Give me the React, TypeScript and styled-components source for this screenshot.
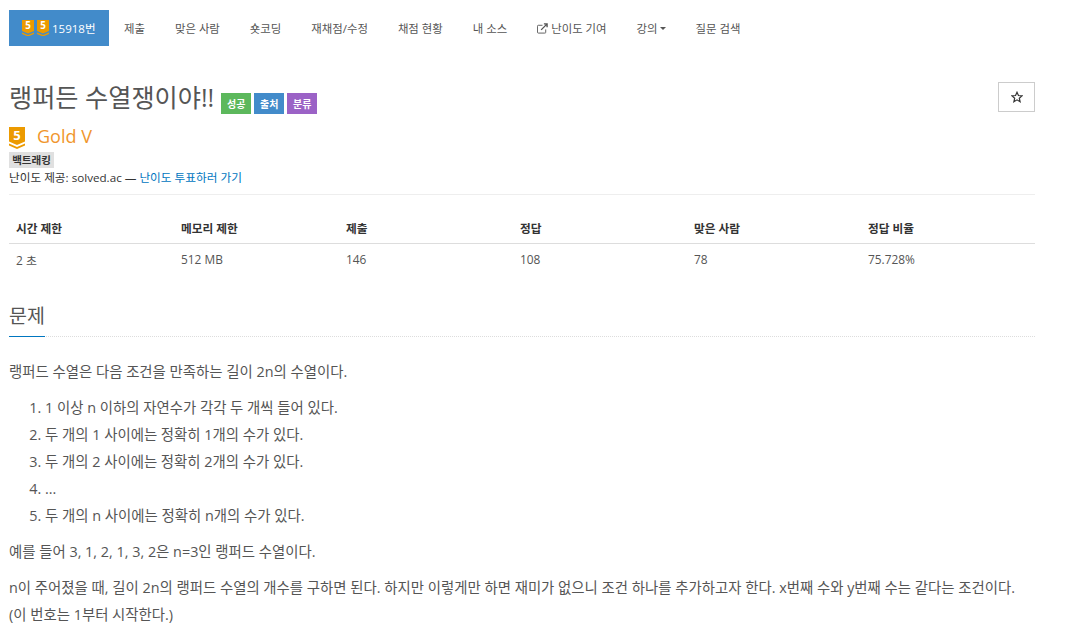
import React from 'react';
import styled, { createGlobalStyle } from 'styled-components';

const GlobalStyle = createGlobalStyle`
    html, body {
        margin: 0;
        padding: 0;
        background: #fff;
        overflow: hidden;
    }
    body {
        font-family: 'Open Sans', 'Noto Sans CJK KR', sans-serif;
        font-size: 14px;
        color: #555;
    }
    * {
        box-sizing: border-box;
    }
`;

const TABS = ['제출', '맞은 사람', '숏코딩', '재채점/수정', '채점 현황', '내 소스'];

const COLUMNS = [
    { title: '시간 제한', value: '2 초', width: 165 },
    { title: '메모리 제한', value: '512 MB', width: 165 },
    { title: '제출', value: '146', width: 174 },
    { title: '정답', value: '108', width: 174 },
    { title: '맞은 사람', value: '78', width: 174 },
    { title: '정답 비율', value: '75.728%', width: 174 },
];

const CONDITIONS = [
    '1 이상 n 이하의 자연수가 각각 두 개씩 들어 있다.',
    '두 개의 1 사이에는 정확히 1개의 수가 있다.',
    '두 개의 2 사이에는 정확히 2개의 수가 있다.',
    '...',
    '두 개의 n 사이에는 정확히 n개의 수가 있다.',
];

const TierBadge: React.FC<{ size: number }> = ({ size }) => (
    <BadgeSvg viewBox="0 0 16 22" width={size} height={(size * 22) / 16}>
        <path d="M0 0H16V14.5L8 18L0 14.5Z" fill="#ec9a00" />
        <path d="M0 16.5L8 20L16 16.5V18.5L8 22L0 18.5Z" fill="#ec9a00" />
        <text x="8" y="12.6" textAnchor="middle" fontSize="13" fontWeight="700" fill="#fff" fontFamily="'Open Sans', sans-serif">
            5
        </text>
    </BadgeSvg>
);

const App: React.FC = () => {
    return (
        <Page>
            <GlobalStyle />
            <Tabs>
                <ActiveTab>
                    <TierBadge size={12} />
                    <TierBadge size={12} />
                    <span>15918번</span>
                </ActiveTab>
                {TABS.map((tab) => (
                    <Tab key={tab}>{tab}</Tab>
                ))}
                <Tab>
                    <svg viewBox="0 0 12 12" width="11" height="11" fill="none" stroke="#555" strokeWidth="1">
                        <path d="M9.5 7V10.5A1 1 0 0 1 8.5 11H1.5A1 1 0 0 1 .5 10V3.5A1 1 0 0 1 1.5 2.5H6" />
                        <path d="M4.5 7.5L10.5 1.5M7.5 1H11V4.5" strokeWidth="1.5" />
                    </svg>
                    난이도 기여
                </Tab>
                <Tab>
                    강의
                    <Caret />
                </Tab>
                <Tab>질문 검색</Tab>
            </Tabs>

            <TitleRow>
                <Title>랭퍼든 수열쟁이야!!</Title>
                <Label $color="#5cb85c">성공</Label>
                <Label $color="#428bca">출처</Label>
                <Label $color="#9b62c6">분류</Label>
                <StarButton>
                    <svg viewBox="0 0 24 24" width="12" height="12" fill="none" stroke="#333" strokeWidth="2.4">
                        <path d="M12 2.5L14.9 9L22 9.7L16.6 14.4L18.2 21.4L12 17.7L5.8 21.4L7.4 14.4L2 9.7L9.1 9Z" />
                    </svg>
                </StarButton>
            </TitleRow>

            <TierRow>
                <TierBadge size={16} />
                <TierName>Gold V</TierName>
            </TierRow>
            <Tag>백트래킹</Tag>
            <Credit>
                난이도 제공: solved.ac — <CreditLink>난이도 투표하러 가기</CreditLink>
            </Credit>
            <Divider />

            <InfoTable>
                <thead>
                    <tr>
                        {COLUMNS.map((col) => (
                            <HeadCell key={col.title} $width={col.width}>
                                {col.title}
                            </HeadCell>
                        ))}
                    </tr>
                </thead>
                <tbody>
                    <tr>
                        {COLUMNS.map((col) => (
                            <BodyCell key={col.title}>{col.value}</BodyCell>
                        ))}
                    </tr>
                </tbody>
            </InfoTable>

            <SectionHeader>
                <SectionTitle>문제</SectionTitle>
            </SectionHeader>

            <Paragraph>랭퍼드 수열은 다음 조건을 만족하는 길이 2n의 수열이다.</Paragraph>
            <Conditions>
                {CONDITIONS.map((item) => (
                    <Condition key={item}>{item}</Condition>
                ))}
            </Conditions>
            <Paragraph>예를 들어 3, 1, 2, 1, 3, 2은 n=3인 랭퍼드 수열이다.</Paragraph>
            <LastParagraph>
                n이 주어졌을 때, 길이 2n의 랭퍼드 수열의 개수를 구하면 된다. 하지만 이렇게만 하면 재미가 없으니 조건 하나를 추가하고자 한다. x번째 수와 y번째 수는 같다는 조건이다.
                <br />
                (이 번호는 1부터 시작한다.)
            </LastParagraph>
        </Page>
    );
};

const Page = styled.div`
    width: 1035px;
    padding: 10px 0 0 9px;
`;

const Tabs = styled.div`
    display: flex;
    height: 36px;
`;

const Tab = styled.a`
    display: flex;
    align-items: center;
    gap: 3px;
    padding: 0 15px;
    font-size: 11.4px;
    color: #555;
    white-space: nowrap;
`;

const ActiveTab = styled(Tab)`
    gap: 3px;
    width: 100px;
    padding: 0 0 0 13px;
    background: #428bca;
    color: #fff;
    font-size: 11.5px;
`;

const BadgeSvg = styled.svg`
    display: block;
    flex: none;
`;

const Caret = styled.span`
    display: inline-block;
    margin-left: -1px;
    border-top: 3px solid #555;
    border-left: 3.5px solid transparent;
    border-right: 3.5px solid transparent;
`;

const TitleRow = styled.div`
    display: flex;
    align-items: flex-end;
    height: 32px;
    margin-top: 36px;
`;

const Title = styled.h1`
    margin: 0 7px 2px 0;
    font-size: 25.2px;
    font-weight: 400;
    line-height: 30px;
    color: #555;
`;

const Label = styled.span<{ $color: string }>`
    display: flex;
    align-items: center;
    justify-content: center;
    width: 30px;
    height: 21px;
    margin: 0 3px 0 0;
    background: ${(props) => props.$color};
    color: #fff;
    font-size: 10px;
    font-weight: 700;
`;

const StarButton = styled.button`
    display: flex;
    align-items: center;
    justify-content: center;
    align-self: flex-start;
    width: 37px;
    height: 30px;
    margin-left: auto;
    padding: 0;
    background: #fff;
    border: 1px solid #ccc;
`;

const TierRow = styled.div`
    display: flex;
    align-items: center;
    gap: 12px;
    height: 22px;
    margin-top: 13px;
`;

const TierName = styled.span`
    padding-bottom: 5px;
    font-size: 18px;
    color: #f0962c;
`;

const Tag = styled.div`
    width: 45px;
    height: 16px;
    margin-top: 3px;
    background: #e0e0e0;
    color: #333;
    font-size: 10.5px;
    font-weight: 700;
    line-height: 16px;
    text-align: center;
`;

const Credit = styled.div`
    margin-top: 1px;
    font-size: 11.65px;
    line-height: 18px;
    color: #333;
`;

const CreditLink = styled.a`
    color: #0076c0;
`;

const Divider = styled.hr`
    height: 1px;
    margin: 7px 0 0;
    border: 0;
    background: #eee;
`;

const InfoTable = styled.table`
    width: 1026px;
    margin-top: 20px;
    border-collapse: collapse;
    table-layout: fixed;
`;

const HeadCell = styled.th<{ $width: number }>`
    width: ${(props) => props.$width}px;
    height: 28px;
    padding: 0 7px 2px;
    border-bottom: 1px solid #ddd;
    color: #333;
    font-size: 11.7px;
    font-weight: 700;
    text-align: left;
`;

const BodyCell = styled.td`
    height: 32px;
    padding: 0 7px;
    font-size: 11.9px;
    color: #555;
`;

const SectionHeader = styled.div`
    height: 37px;
    margin: 25px 0 21px;
    border-bottom: 1px dotted #ddd;
`;

const SectionTitle = styled.h2`
    display: inline-block;
    height: 37px;
    margin: 0;
    border-bottom: 1px solid #0076c0;
    color: #555;
    font-size: 19.5px;
    font-weight: 400;
    line-height: 32px;
`;

const Paragraph = styled.p`
    margin: 0 0 9px;
    font-size: 14.4px;
    line-height: 27px;
    color: #555;
`;

const Conditions = styled.ol`
    margin: 0 0 9px;
    padding: 0 0 0 36px;
    font-size: 14.4px;
    line-height: 27px;
`;

const Condition = styled.li`
    color: #555;
`;

const LastParagraph = styled(Paragraph)`
    margin-bottom: 0;
`;

export default App;
